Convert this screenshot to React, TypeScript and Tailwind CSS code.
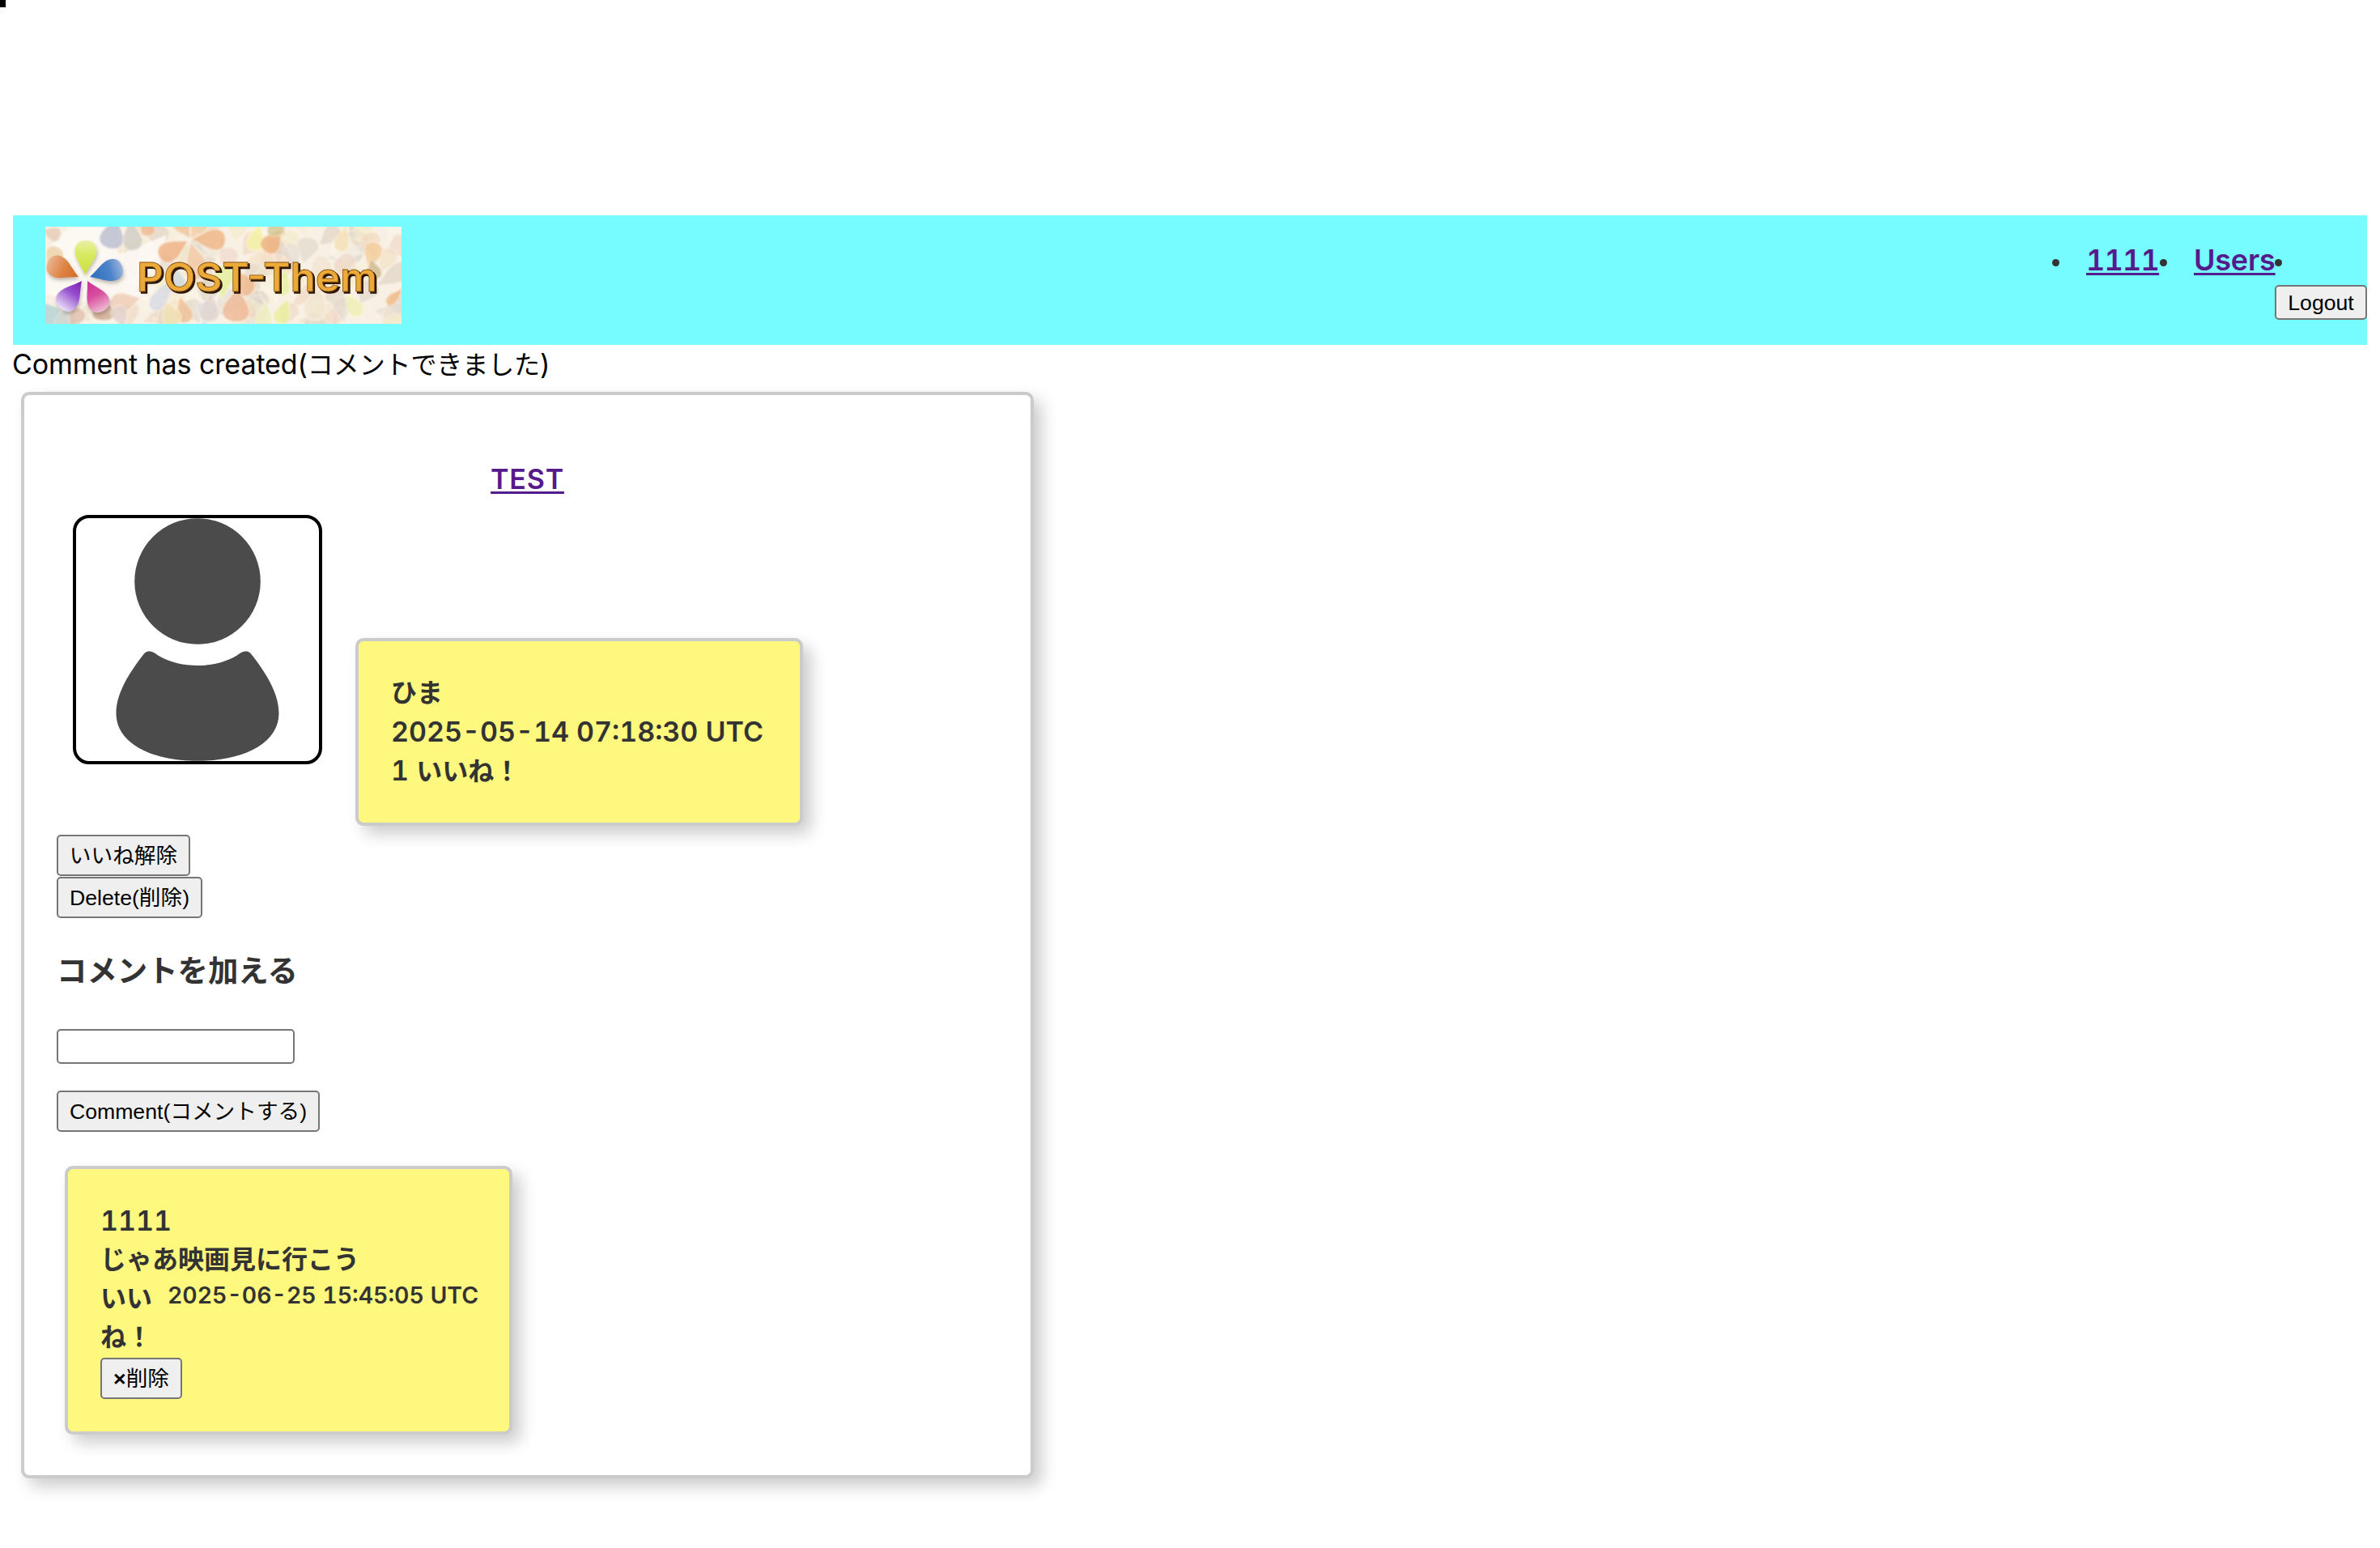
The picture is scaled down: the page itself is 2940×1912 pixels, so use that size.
import type { ReactNode } from "react";

type PetalProps = {
  x: number;
  y: number;
  angle: number;
  length: number;
  width: number;
  fill: string;
  opacity?: number;
  stroke?: string;
};

// Teardrop whose tip sits at (x, y) and which points along `angle` degrees.
function Petal({ x, y, angle, length, width, fill, opacity = 1, stroke = "none" }: PetalProps) {
  return (
    <path
      d="M0 0 C0.3 -0.22 0.48 -0.5 0.7 -0.5 C0.9 -0.5 1 -0.28 1 0 C1 0.28 0.9 0.5 0.7 0.5 C0.48 0.5 0.3 0.22 0 0Z"
      transform={`translate(${x} ${y}) rotate(${angle}) scale(${length} ${width})`}
      fill={fill}
      opacity={opacity}
      stroke={stroke}
      strokeWidth={0.03}
    />
  );
}

const PASTELS = ["#f1e2cc", "#f1d6bd", "#f7efd6", "#e3dad0", "#fbf6ea", "#f3dfc4", "#dfd6ca", "#f4ebc8", "#efd6c6", "#dccfc0"];

const scatter = Array.from({ length: 150 }, (_, i) => {
  const col = i % 22;
  const row = Math.floor(i / 22);
  return {
    x: 85 + col * 17 + ((i * 37) % 13) - 6,
    y: row * 20 + ((i * 53) % 15) - 8,
    angle: (i * 67) % 360,
    length: 32 + ((i * 29) % 16),
    width: 20 + ((i * 17) % 11),
    fill: PASTELS[(i * 7) % PASTELS.length],
  };
});

const accents: PetalProps[] = [
  { x: 2, y: 50, angle: -60, length: 28, width: 22, fill: "#ecd0a4" },
  { x: -4, y: 4, angle: 20, length: 24, width: 18, fill: "#e8cbb8" },
  { x: 88, y: -12, angle: 103, length: 40, width: 30, fill: "#babdd0" },
  { x: 104, y: -10, angle: 82, length: 40, width: 24, fill: "#cfccc4" },
  { x: 122, y: -14, angle: 75, length: 26, width: 18, fill: "#efba90" },
  { x: 177, y: 17, angle: 150, length: 42, width: 25, fill: "#efb083" },
  { x: 180, y: 15, angle: 2, length: 43, width: 26, fill: "#f0b585" },
  { x: 180, y: 15, angle: -125, length: 34, width: 20, fill: "#efc49a" },
  { x: 180, y: 15, angle: -60, length: 30, width: 22, fill: "#f1cda6" },
  { x: 179, y: 18, angle: 75, length: 48, width: 26, fill: "#f3c9a8" },
  { x: 264, y: -4, angle: 100, length: 34, width: 22, fill: "#f3f2a2" },
  { x: 292, y: 2, angle: 125, length: 36, width: 24, fill: "#efb27c" },
  { x: 282, y: -12, angle: 80, length: 24, width: 22, fill: "#d3c794" },
  { x: 218, y: 90, angle: -85, length: 42, width: 24, fill: "#e6f09c" },
  { x: 232, y: 52, angle: 55, length: 38, width: 24, fill: "#f0b78a" },
  { x: 298, y: 52, angle: 105, length: 34, width: 22, fill: "#e8f0a2" },
  { x: 372, y: -2, angle: 105, length: 34, width: 18, fill: "#f5e0b4" },
  { x: 400, y: 54, angle: -78, length: 36, width: 22, fill: "#f3cd9a" },
  { x: 402, y: 40, angle: 75, length: 26, width: 18, fill: "#ceb78c" },
  { x: 442, y: 76, angle: 135, length: 28, width: 12, fill: "#f1b985" },
  { x: 370, y: 82, angle: 55, length: 34, width: 20, fill: "#eef0b4" },
  { x: 238, y: 74, angle: 95, length: 44, width: 34, fill: "#efb897" },
  { x: 166, y: 86, angle: 75, length: 34, width: 20, fill: "#efbf97" },
  { x: 148, y: 90, angle: 70, length: 34, width: 24, fill: "#f3e3b4" },
  { x: 196, y: 124, angle: -80, length: 32, width: 24, fill: "#d5d8de" },
  { x: 205, y: 80, angle: 95, length: 38, width: 24, fill: "#e2d6d0" },
  { x: 300, y: 88, angle: 110, length: 34, width: 20, fill: "#eaf09c" },
  { x: 272, y: 92, angle: 95, length: 32, width: 22, fill: "#f0efc0" },
  { x: 340, y: 74, angle: 105, length: 42, width: 28, fill: "#f1e6cf" },
  { x: 118, y: 88, angle: 165, length: 38, width: 26, fill: "#efcdb8" },
  { x: 160, y: 62, angle: 125, length: 50, width: 20, fill: "#d8dae4" },
  { x: 160, y: 48, angle: 80, length: 34, width: 20, fill: "#cfdbe2" },
  { x: -8, y: 92, angle: 50, length: 34, width: 26, fill: "#b4d2d4" },
  { x: 6, y: 126, angle: -30, length: 34, width: 22, fill: "#c9d3cc" },
  { x: 72, y: 88, angle: 90, length: 28, width: 28, fill: "#cda890" },
  { x: 30, y: 126, angle: -60, length: 28, width: 20, fill: "#e3c0ac" },
  { x: 98, y: 126, angle: -110, length: 30, width: 20, fill: "#e2d3cc" },
];

function Logo() {
  return (
    <svg className="block h-[120px] w-[440px]" viewBox="0 0 440 120" role="img" aria-label="POST-Them">
      <defs>
        <linearGradient id="green" x1="0" x2="1"><stop offset="0" stopColor="#cbe03a" /><stop offset="0.6" stopColor="#d8ea62" /><stop offset="1" stopColor="#eaf0a8" /></linearGradient>
        <linearGradient id="orange" x1="0" x2="1"><stop offset="0" stopColor="#d4691f" /><stop offset="0.5" stopColor="#dd8446" /><stop offset="1" stopColor="#eab48e" /></linearGradient>
        <linearGradient id="blue" x1="0" x2="1"><stop offset="0" stopColor="#2f6fbd" /><stop offset="0.6" stopColor="#4a83c9" /><stop offset="1" stopColor="#9cb4da" /></linearGradient>
        <linearGradient id="purple" x1="0" x2="1"><stop offset="0" stopColor="#7a1fae" /><stop offset="0.45" stopColor="#9750cf" /><stop offset="1" stopColor="#ece2f8" /></linearGradient>
        <linearGradient id="pink" x1="0" x2="1"><stop offset="0" stopColor="#cc2a98" /><stop offset="0.5" stopColor="#d8519f" /><stop offset="1" stopColor="#f0bfd4" /></linearGradient>
        <filter id="soft"><feGaussianBlur stdDeviation="0.8" /></filter>
        <filter id="shade" x="-20%" y="-20%" width="150%" height="150%"><feDropShadow dx="1" dy="3" stdDeviation="2" floodColor="#6b5a50" floodOpacity="0.4" /></filter>
      </defs>
      <rect width="440" height="120" fill="#f8f0e4" />
      <g filter="url(#soft)">
        {scatter.map((p, i) => (
          <Petal key={i} {...p} opacity={0.6} stroke="#fffaf0" />
        ))}
        <path d="M0 30 L30 0 L72 0 L92 34 L150 10 L140 50 L118 62 L112 78 L128 92 L96 86 L60 96 L0 84Z" fill="#fdf8f4" opacity="0.9" />
        {accents.map((p, i) => (
          <Petal key={i} {...p} opacity={0.8} stroke="#fffaf0" />
        ))}
      </g>
      <g filter="url(#shade)">
        <Petal x={49} y={59} angle={-88} length={42} width={27} fill="url(#green)" />
        <Petal x={41} y={62} angle={-154} length={42} width={27} fill="url(#orange)" />
        <Petal x={55} y={62} angle={-17} length={42} width={27} fill="url(#blue)" />
        <Petal x={45} y={67} angle={127} length={43} width={28} fill="url(#purple)" />
        <Petal x={52} y={67} angle={62} length={42} width={27} fill="url(#pink)" />
      </g>
      <g fontFamily="Inter, sans-serif" fontWeight="600" fontSize="49">
        <text x="115" y="81.5" textLength="297" lengthAdjust="spacingAndGlyphs" fill="#2b1608" stroke="#2b1608" strokeWidth="1.5">POST-Them</text>
        <text x="113" y="80" textLength="297" lengthAdjust="spacingAndGlyphs" fill="#ecaa38" stroke="#8a5514" strokeWidth="0.8">POST-Them</text>
      </g>
    </svg>
  );
}

function Avatar() {
  return (
    <div className="ml-5 h-[308px] w-[308px] shrink-0 overflow-hidden rounded-[20px] border-4 border-black bg-white">
      <svg className="block h-[300px] w-[300px]" viewBox="0 0 300 300" fill="#4b4b4b">
        <circle cx="150" cy="78" r="77.8" />
        <path d="M90 164.500 C95 164.500 98 167 102 170 C117 178.500 133 182 150 182 C167 182 183 178.500 198 170 C202 167 205 164.500 210 164.500 C214 164.500 216 167 218 170 C238 196 250.500 219 250.500 241 C250.500 278 207 299.800 150 299.800 C93 299.800 49.500 278 49.500 241 C49.500 219 62 196 82 170 C84 167 86 164.500 90 164.500Z" />
      </svg>
    </div>
  );
}

function Button({ className, children }: { className: string; children: ReactNode }) {
  return (
    <button
      className={`block whitespace-nowrap rounded-[5px] border-2 border-[#767676] bg-[#efefef] text-center font-['Liberation_Sans','Noto_Sans_CJK_JP',sans-serif] text-[26.67px] font-normal text-black ${className}`}
    >
      {children}
    </button>
  );
}

function Note({ className, children }: { className: string; children: ReactNode }) {
  return (
    <div
      className={`rounded-[10px] border-4 border-[#cbcbcb] bg-[#fef97e] p-10 shadow-[10px_10px_20px_rgba(0,0,0,0.2)] ${className}`}
    >
      {children}
    </div>
  );
}

function Dot() {
  return <span className="mt-[54px] h-[9px] w-[9px] shrink-0 rounded-full bg-[#333]" />;
}

export default function App() {
  return (
    <div className="h-[1912px] w-[2940px] overflow-hidden bg-white font-['Inter','Noto_Sans_CJK_JP',sans-serif] text-[34px] leading-[48px] text-black">
      <div className="h-[9px] w-[7px] bg-black" />
      <header className="mx-4 mt-[257px] flex h-40 justify-between bg-[#76fbfe]">
        <div className="ml-10 mt-[14px]">
          <Logo />
        </div>
        <nav className="flex text-[36px] font-semibold text-[#551a8b]">
          <Dot />
          <a className="ml-[33px] mt-[31px] block h-12 w-[91px] whitespace-nowrap tabular-nums tracking-[-0.75px] underline decoration-[3px] underline-offset-[3px]">1111</a>
          <Dot />
          <a className="ml-[33px] mt-[31px] block h-12 w-[100px] whitespace-nowrap tracking-[-0.2px] underline decoration-[3px] underline-offset-[3px]">Users</a>
          <div className="flex w-[114px] flex-col">
            <Dot />
            <Button className="mt-[23px] h-[43px] w-[114px] leading-[36px]">Logout</Button>
          </div>
        </nav>
      </header>

      <p className="ml-[15px] h-12 whitespace-nowrap tracking-[-0.1px]">
        Comment has created(<span className="text-[32px]">コメントできました</span>)
      </p>

      <main className="ml-[26px] mt-[10px] h-[1342px] w-[1251px] rounded-[10px] border-4 border-[#cbcbcb] bg-white p-10 font-semibold tabular-nums text-[#333] shadow-[10px_10px_20px_rgba(0,0,0,0.2)]">
        <h2 className="mt-10 text-center text-[#551a8b]">
          <a className="tracking-[0.8px] underline decoration-[3px] underline-offset-[3px]">TEST</a>
        </h2>

        <div className="mt-5 flex items-start">
          <Avatar />
          <Note className="ml-[41px] mt-[152px] h-[232px] w-[553px] whitespace-nowrap">
            <p className="text-[32px]">ひま</p>
            <p>2025-05-14 07:18:30 UTC</p>
            <p>
              1 <span className="text-[32px]">いいね！</span>
            </p>
          </Note>
        </div>

        <Button className="mt-[11px] h-[51px] w-[165px] leading-[44px]">いいね解除</Button>
        <Button className="mt-px h-[51px] w-[180px] leading-[46px]">Delete(削除)</Button>

        <h3 className="mt-[42px] h-12 whitespace-nowrap text-[37.4px] font-bold">コメントを加える</h3>

        <input className="mt-[47px] block h-[43px] w-[294px] rounded-[5px] border-2 border-[#767676] bg-white px-1 outline-none" />
        <Button className="mt-[33px] h-[51px] w-[325px] leading-[46px]">Comment(コメントする)</Button>

        <Note className="ml-[10px] mt-[42px] h-[332px] w-[553px] whitespace-nowrap">
          <p>1111</p>
          <p className="text-[32px]">じゃあ映画見に行こう</p>
          <div className="flex h-24 justify-between">
            <p className="text-[32px]">
              いい
              <br />
              ね！
            </p>
            <p className="w-[382px] text-[28.4px] leading-[39px]">2025-06-25 15:45:05 UTC</p>
          </div>
          <Button className="mt-px h-[51px] w-[101px] leading-[46px]">
            <span className="font-bold">×</span>削除
          </Button>
        </Note>
      </main>
    </div>
  );
}
